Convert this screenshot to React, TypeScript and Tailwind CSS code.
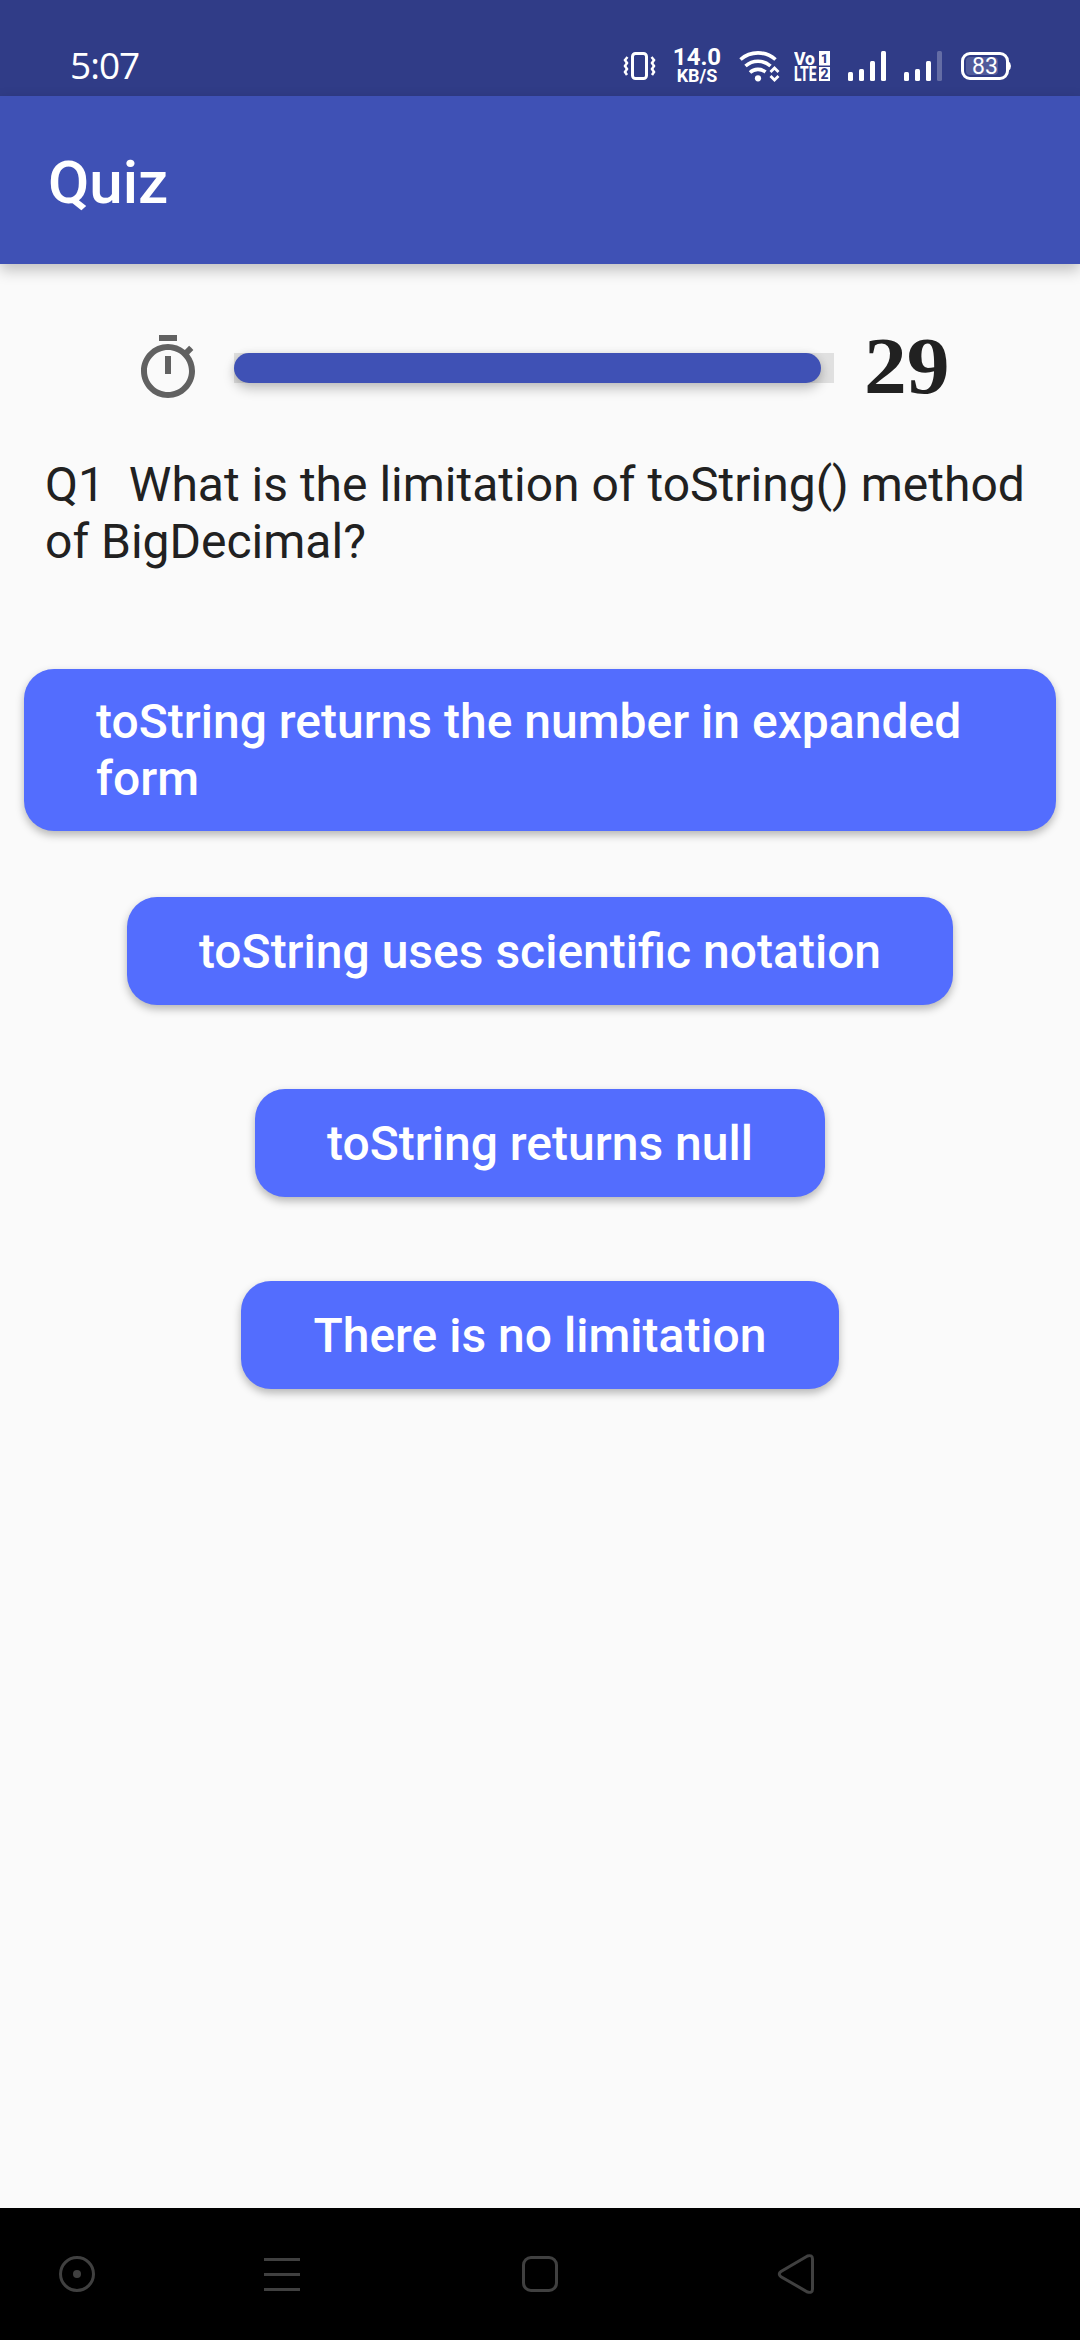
import React from "react";

const TOTAL_SECONDS = 30;

const answers = [
  { text: "toString returns the number in expanded form", margin: "" },
  { text: "toString uses scientific notation", margin: "mt-[66px]" },
  { text: "toString returns null", margin: "mt-[84px]" },
  { text: "There is no limitation", margin: "mt-[84px]" },
];

function SignalBars({ faded = false }: { faded?: boolean }) {
  return (
    <svg width="38" height="30" viewBox="0 0 38 30" fill="#fff">
      <rect x="0" y="21" width="5" height="9" rx="1.5" />
      <rect x="11" y="18" width="5" height="12" rx="1.5" />
      <rect x="22" y="10" width="5" height="20" rx="1.5" />
      <rect x="33" y="0" width="5" height="30" rx="1.5" opacity={faded ? 0.25 : 1} />
    </svg>
  );
}

function VibrateIcon() {
  return (
    <svg width="34" height="30" viewBox="0 0 34 30" fill="none" stroke="#fff">
      <rect x="9.500" y="2.500" width="14" height="25" rx="3" strokeWidth="3" />
      <path
        d="M4.500 6 L2 9 L4 12 L2 15 L4 18 L2 21 L4 24 M28.500 6 L31 9 L29 12 L31 15 L29 18 L31 21 L29 24"
        strokeWidth="2.500"
      />
    </svg>
  );
}

function WifiIcon() {
  return (
    <svg width="42" height="31" viewBox="0 0 42 31" fill="none" stroke="#fff">
      <path d="M1.500 8.500 A26.500 26.500 0 0 1 36.500 8.500" strokeWidth="3.600" />
      <path d="M6.500 15 A19 19 0 0 1 31.500 15" strokeWidth="3.600" />
      <path d="M11 21.500 A12 12 0 0 1 26.500 21" strokeWidth="3.600" />
      <circle cx="19" cy="27.300" r="3.100" fill="#fff" stroke="none" />
      <path d="M31.500 21 L35.500 17 L39.500 21 M31.500 25 L35.500 29 L39.500 25" strokeWidth="2.800" />
    </svg>
  );
}

function VolteIcon() {
  return (
    <svg width="36" height="30" viewBox="0 0 36 30" fill="#fff" fontFamily="Roboto" fontWeight="800">
      <text x="0" y="14" fontSize="18" textLength="21" lengthAdjust="spacingAndGlyphs">Vo</text>
      <text x="0" y="30" fontSize="19.500" textLength="22.500" lengthAdjust="spacingAndGlyphs">LTE</text>
      <rect x="25" y="0" width="11" height="14.500" />
      <rect x="25" y="16" width="11" height="14" />
      <text x="30.500" y="12" fontSize="13" textAnchor="middle" fill="#303c87">1</text>
      <text x="30.500" y="28" fontSize="14" textAnchor="middle" fill="#303c87">2</text>
    </svg>
  );
}

function BatteryIcon() {
  return (
    <svg width="50" height="28" viewBox="0 0 50 28" fill="none">
      <rect x="1.500" y="1.500" width="45" height="25" rx="7.500" stroke="#fff" strokeWidth="3" />
      <rect x="5" y="5" width="32" height="18" rx="4" fill="#fff" opacity="0.16" />
      <path d="M47.500 9 Q50 11 50 14 Q50 17 47.500 19 Z" fill="#fff" />
      <text x="24" y="22" fontSize="23" fontFamily="Roboto" textAnchor="middle" fill="#fff">83</text>
    </svg>
  );
}

function StatusBar() {
  return (
    <div className="flex h-24 shrink-0 items-start justify-between bg-[#303c87] pr-[69px] pl-[70px] text-white">
      <div className="pt-[47px] font-['Open_Sans'] text-[37px] leading-[36px] tracking-[-1px]">5:07</div>
      <div className="mt-[51px] flex h-[30px] items-center">
        <VibrateIcon />
        <div className="ml-[14px] w-[52px] text-center font-bold">
          <div className="text-[24px] leading-[20px]">14.0</div>
          <div className="text-[18px] leading-[18px]">KB/S</div>
        </div>
        <div className="ml-[16px]"><WifiIcon /></div>
        <div className="ml-[13px]"><VolteIcon /></div>
        <div className="ml-[18px]"><SignalBars /></div>
        <div className="ml-[18px]"><SignalBars faded /></div>
        <div className="ml-[19px]"><BatteryIcon /></div>
      </div>
    </div>
  );
}

function TimerIcon() {
  return (
    <svg width="72" height="72" viewBox="0 0 24 24" fill="#616161">
      <path d="M15 1H9v2h6V1zm-4 13h2V8h-2v6zm8.030-6.610l1.420-1.420c-.43-.51-.9-.99-1.410-1.410l-1.420 1.420C16.070 4.740 14.120 4 12 4c-4.970 0-9 4.030-9 9s4.020 9 9 9 9-4.030 9-9c0-2.120-.74-4.070-1.970-5.610zM12 20c-3.870 0-7-3.130-7-7s3.130-7 7-7 7 3.130 7 7-3.130 7-7 7z" />
    </svg>
  );
}

function Countdown({ remaining }: { remaining: number }) {
  return (
    <div className="mt-[68px] flex h-[72px] items-center pl-[132px]">
      <TimerIcon />
      <div className="ml-[30px] h-[30px] w-[600px] bg-[#e0e0e0]">
        <div
          className="h-full rounded-full bg-[#3f51b5] shadow-[0_6px_12px_rgba(0,0,0,0.22),0_0_8px_rgba(0,0,0,0.08)]"
          style={{ width: `${(remaining / TOTAL_SECONDS) * 100}%` }}
        />
      </div>
      <div className="ml-[30px] origin-left scale-x-[1.07] pb-1 font-['Liberation_Serif'] text-[80px] leading-[72px] font-bold text-[#212121]">
        {Math.floor(remaining)}
      </div>
    </div>
  );
}

function NavigationBar() {
  return (
    <nav className="mt-auto flex h-[132px] shrink-0 items-center bg-black pl-[58px]">
      <svg width="38" height="42" viewBox="0 0 38 42" fill="none" stroke="#404040" strokeWidth="3">
        <circle cx="19" cy="21" r="16.500" />
        <circle cx="19" cy="21" r="4" fill="#404040" stroke="none" />
      </svg>
      <svg className="ml-[168px]" width="36" height="42" viewBox="0 0 36 42" fill="#404040">
        <rect y="5" width="36" height="3" />
        <rect y="20" width="36" height="3" />
        <rect y="35" width="36" height="3" />
      </svg>
      <svg className="ml-[222px]" width="36" height="42" viewBox="0 0 36 42" fill="none" stroke="#404040" strokeWidth="3">
        <rect x="1.500" y="4.500" width="33" height="33" rx="7.500" />
      </svg>
      <svg className="ml-[219px]" width="38" height="42" viewBox="0 0 38 42" fill="none" stroke="#404040" strokeWidth="3">
        <path d="M30.500 3 L4 18.500 Q0.500 21 4 23.700 L30.500 39 Q35.500 40.500 35.500 36 V6 Q35.500 1.500 30.500 3 Z" />
      </svg>
    </nav>
  );
}

export default function App() {
  return (
    <div className="flex h-[2340px] w-[1080px] flex-col bg-[#fafafa] font-[Roboto]">
      <StatusBar />
      <header className="flex h-[168px] shrink-0 items-center bg-[#3f51b5] pt-[5px] pl-12 text-[60px] font-medium text-white shadow-[0_6px_14px_rgba(0,0,0,0.24)]">
        <h1>Quiz</h1>
      </header>
      <Countdown remaining={29.35} />
      <p className="mt-[52px] px-[45px] text-[48px] leading-[57px] whitespace-pre-wrap text-[#212121]">
        {"Q1  What is the limitation of toString() method of BigDecimal?"}
      </p>
      <div className="mt-[99px] flex flex-col items-center px-6">
        {answers.map(({ text, margin }) => (
          <button
            key={text}
            className={`${margin} min-h-[108px] rounded-[30px] bg-[#536dfe] px-[72px] py-6 text-left text-[48px] leading-[57px] font-medium text-white shadow-[0_4px_8px_rgba(0,0,0,0.28)]`}
          >
            {text}
          </button>
        ))}
      </div>
      <NavigationBar />
    </div>
  );
}
